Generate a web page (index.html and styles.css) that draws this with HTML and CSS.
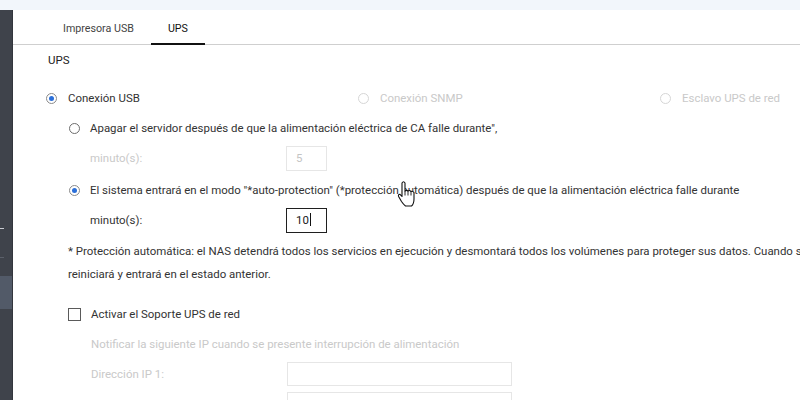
FILE: index.html
```html
<!DOCTYPE html>
<html lang="es">
<head>
<meta charset="utf-8">
<title>UPS</title>
<link rel="stylesheet" href="styles.css">
</head>
<body>

<div class="topbar"></div>

<div class="shell">
  <aside class="sidebar">
    <div class="side-mark"></div>
    <div class="side-mark faint"></div>
    <div class="side-active"></div>
  </aside>

  <main class="content">
    <nav class="tabs">
      <div class="tab">Impresora USB</div>
      <div class="tab active">UPS</div>
    </nav>

    <section class="panel">
      <h2 class="title">UPS</h2>

      <div class="modes">
        <label class="opt"><span class="radio checked"></span>Conexión USB</label>
        <label class="opt disabled"><span class="radio"></span>Conexión SNMP</label>
        <label class="opt disabled"><span class="radio"></span>Esclavo UPS de red</label>
      </div>

      <div class="sub">
        <div class="row">
          <label class="opt"><span class="radio"></span>Apagar el servidor después de que la alimentación eléctrica de CA falle durante",</label>
        </div>
        <div class="row field disabled">
          <span class="field-label">minuto(s):</span>
          <div class="input small">5</div>
        </div>
        <div class="row protect">
          <label class="opt"><span class="radio checked"></span>El sistema entrará en el modo "*auto-protection" (*protección automática) después de que la alimentación eléctrica falle durante</label>
        </div>
        <div class="row field">
          <span class="field-label">minuto(s):</span>
          <div class="input small focus">10<span class="caret"></span></div>
        </div>
      </div>

      <p class="note">* Protección automática: el NAS detendrá todos los servicios en ejecución y desmontará todos los volúmenes para proteger sus datos. Cuando se restablezca la alimentación, el NAS se<br>reiniciará y entrará en el estado anterior.</p>

      <div class="row check-row">
        <label class="opt"><span class="checkbox"></span>Activar el Soporte UPS de red</label>
      </div>

      <div class="sub net disabled">
        <div class="row">Notificar la siguiente IP cuando se presente interrupción de alimentación</div>
        <div class="row field">
          <span class="field-label">Dirección IP 1:</span>
          <div class="input wide"></div>
        </div>
        <div class="row field">
          <span class="field-label">Dirección IP 2:</span>
          <div class="input wide"></div>
        </div>
      </div>
    </section>
  </main>
</div>

<!-- mouse pointer over the form -->
<svg class="pointer" width="20" height="28" viewBox="0 0 20 28">
  <path d="M5 3 Q6.5 0.5 8 3 V11 Q9.5 9.6 11 11 Q12.5 9.9 14 11.5 Q15.5 10.6 17 12.5 V19 Q17 24 14.5 26 H8.5 Q6.5 24.5 4.5 21.5 L1.6 16.5 Q0.9 14.2 3 14.3 L5 16.5 Z" fill="#fff" stroke="#111" stroke-width="1.1" stroke-linejoin="round"/>
  <path d="M11 11 V15.5 M14 11.5 V15.5 M8 11 V15.5" fill="none" stroke="#111" stroke-width="0.9"/>
</svg>

</body>
</html>
```

FILE: styles.css
```css
html, body {
  margin: 0;
  height: 100%;
  overflow: hidden;
}
body {
  font-family: Roboto, "Liberation Sans", sans-serif;
  font-size: 11.45px;
  color: #333;
  background-color: #fff;
  position: relative;
}

.topbar {
  height: 10px;
  background-color: #f2f6fb;
}

.shell {
  display: flex;
  height: 390px;
}

/* left navigation, only its edge is visible */
.sidebar {
  width: 12px;
  flex-shrink: 0;
  background-color: #3f434b;
  border-right: 1px solid #33363d;
  display: flex;
  flex-direction: column;
}
.side-mark {
  width: 4px;
  height: 1px;
  background-color: #c9ccd2;
  margin-top: 218px;
}
.side-mark.faint {
  background-color: #5b606a;
  margin-top: 28px;
}
.side-active {
  height: 33px;
  background-color: #525a68;
  margin-top: 18px;
}

.content {
  flex: 1;
  min-width: 0;
}

/* tabs */
.tabs {
  display: flex;
  height: 34px;
  padding-left: 33px;
  border-bottom: 1px solid #cfcfcf;
}
.tab {
  font-size: 10.7px;
  color: #444;
  padding: 0 17px;
  line-height: 34px;
  padding-top: 2px;
  box-sizing: border-box;
  height: 35px;
}
.tab.active {
  color: #111;
  border-bottom: 2px solid #111;
}

/* panel */
.panel {
  padding-left: 33px;
  width: 900px;
}
.title {
  font-size: 11.5px;
  font-weight: normal;
  color: #222;
  margin: 8px 0 0 2px;
  line-height: 14px;
}

.opt {
  display: flex;
  align-items: center;
  white-space: nowrap;
}
.opt.disabled,
.disabled {
  color: #c9c9c9;
}

.radio {
  width: 9px;
  height: 9px;
  border: 1px solid #6d6d6d;
  border-radius: 50%;
  margin-right: 10px;
  position: relative;
  flex-shrink: 0;
}
.radio.checked {
  border-color: #8a8a8a;
}
.radio.checked::after {
  content: "";
  position: absolute;
  left: 2px;
  top: 2px;
  width: 5px;
  height: 5px;
  border-radius: 50%;
  background-color: #2b6fd9;
}
.disabled .radio {
  border-color: #d6d6d6;
}

.checkbox {
  width: 11px;
  height: 11px;
  border: 1px solid #5a5a5a;
  margin-right: 10px;
  flex-shrink: 0;
}

.modes {
  display: grid;
  grid-template-columns: 312px 302px auto;
  height: 30px;
  align-items: center;
  margin-top: 16px;
}
.modes .radio {
  margin-right: 11px;
}

.sub {
  padding-left: 23px;
}
.row {
  height: 30px;
  display: flex;
  align-items: center;
}
.row.protect {
  margin-top: 2px;
}
.sub .row.field,
.net .row {
  padding-left: 21px;
}
.field-label {
  width: 196px;
  flex-shrink: 0;
}

.input {
  height: 23px;
  border: 1px solid #e6e6e6;
  box-sizing: border-box;
  padding-left: 9px;
  line-height: 21px;
  color: #c4c4c4;
}
.input.small {
  width: 41px;
  height: 25px;
  line-height: 23px;
}
.input.focus {
  border: 1.5px solid #1f1f1f;
  color: #222;
}
.input.wide {
  width: 225px;
  height: 24px;
}
.caret {
  display: inline-block;
  width: 1px;
  height: 13px;
  background-color: #111;
  vertical-align: -2px;
  margin-left: 1px;
}

.note {
  margin: 5px 0 0 22px;
  line-height: 23px;
  white-space: nowrap;
}

.check-row {
  margin-top: 13px;
  padding-left: 22px;
}

.net {
  padding-left: 24px;
}

.pointer {
  position: absolute;
  left: 397px;
  top: 180px;
}
```
